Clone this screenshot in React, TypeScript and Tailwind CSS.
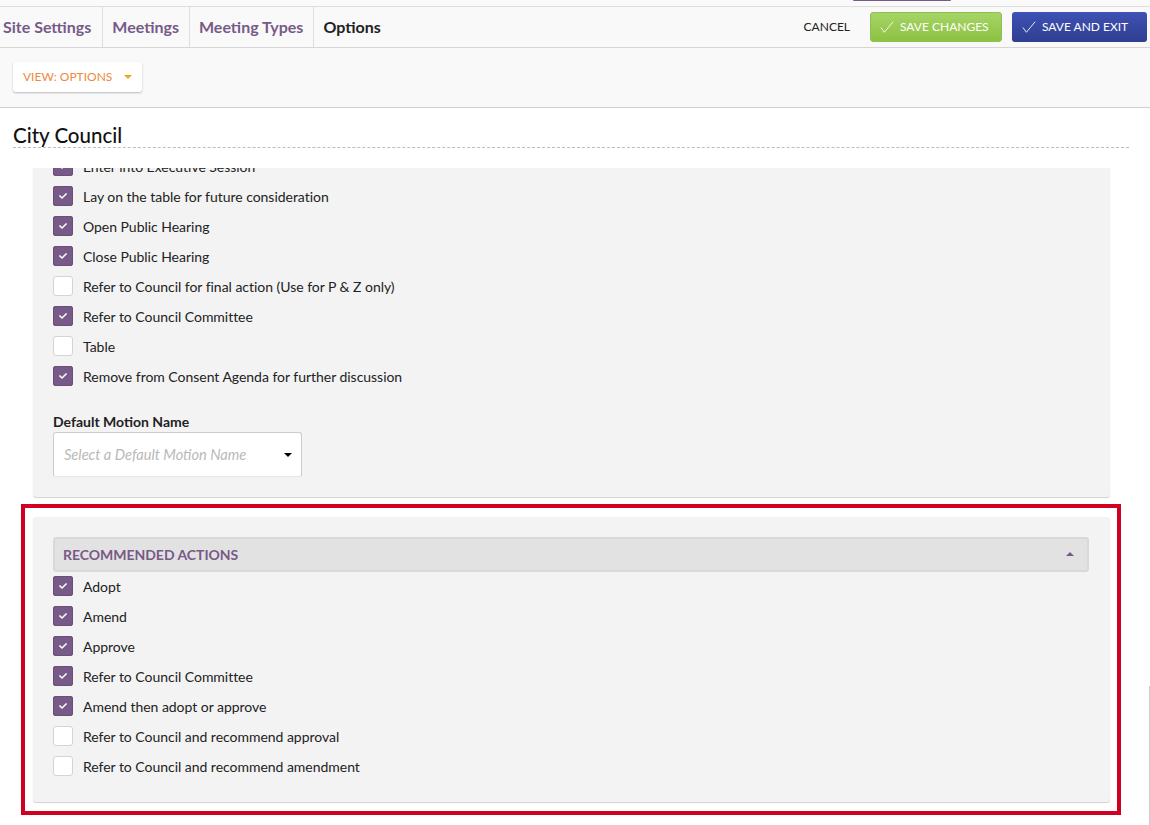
import { FaCheck } from "react-icons/fa"

const motionRows = [
  { label: "Enter into Executive Session", checked: true },
  { label: "Lay on the table for future consideration", checked: true },
  { label: "Open Public Hearing", checked: true },
  { label: "Close Public Hearing", checked: true },
  { label: "Refer to Council for final action (Use for P & Z only)", checked: false },
  { label: "Refer to Council Committee", checked: true },
  { label: "Table", checked: false },
  { label: "Remove from Consent Agenda for further discussion", checked: true },
]

const recommendedRows = [
  { label: "Adopt", checked: true },
  { label: "Amend", checked: true },
  { label: "Approve", checked: true },
  { label: "Refer to Council Committee", checked: true },
  { label: "Amend then adopt or approve", checked: true },
  { label: "Refer to Council and recommend approval", checked: false },
  { label: "Refer to Council and recommend amendment", checked: false },
]

function CheckRow({ label, checked }: { label: string; checked: boolean }) {
  return (
    <div className="flex h-5 items-center gap-[10px]">
      {checked ? (
        <span className="mb-[2px] flex h-5 w-5 items-center justify-center rounded-[3px] bg-[#775a87] shadow-[inset_0_0_0_1px_#6a4f7a]">
          <FaCheck className="h-2 w-2 text-white" />
        </span>
      ) : (
        <span className="mb-[2px] h-5 w-5 rounded-[3px] border border-[#d4d4d4] bg-white" />
      )}
      <span className="text-[14px] leading-5 tracking-[-0.03px] text-[#222222]">{label}</span>
    </div>
  )
}

function Tab({ label, active, first }: { label: string; active?: boolean; first?: boolean }) {
  return (
    <div
      className={`flex h-full items-center border-r border-[#dedede] text-[16px] font-bold ${first ? "pl-[3px] pr-[11px]" : "pl-[9px] pr-[10px]"} ${active ? "border-r-0 text-[#222222]" : "text-[#775a87]"}`}
    >
      {label}
    </div>
  )
}

function SaveCheck() {
  return (
    <svg viewBox="0 0 16 14" className="h-[14px] w-[14px]" fill="none" stroke="currentColor" strokeWidth="1">
      <path d="M1 7.5 5 13 15 1" />
    </svg>
  )
}

export default function App() {
  return (
    <div className="relative h-[825px] w-[1150px] overflow-hidden bg-white font-['Lato',sans-serif]">
      {/* top strip */}
      <div className="h-[7px] border-b border-[#dedede] bg-[#fafafa] pl-[853px]">
        <div className="h-px w-[98px] rounded-b bg-[#775a87]" />
      </div>

      {/* tabs + actions */}
      <div className="flex h-[41px] items-center justify-between border-b border-[#d6d6d6] bg-[#f9f9f9] pr-[3px] shadow-[0_1px_1px_rgba(0,0,0,0.08)]">
        <div className="flex h-full items-center">
          <Tab label="Site Settings" first />
          <Tab label="Meetings" />
          <Tab label="Meeting Types" />
          <Tab label="Options" active />
        </div>
        <div className="flex items-center">
          <span className="mr-5 text-[12px] text-[#222222]">CANCEL</span>
          <button className="mr-[10px] flex h-[30px] w-[132px] items-center gap-[6px] rounded-[3px] border border-[#8fc04f] bg-gradient-to-b from-[#a6d566] to-[#8dc140] pl-[9px] text-[12px] text-white">
            <SaveCheck />
            SAVE CHANGES
          </button>
          <button className="flex h-[30px] w-[135px] items-center gap-[6px] rounded-[3px] bg-gradient-to-b from-[#3f52b5] to-[#2f3e8f] pl-[10px] text-[12px] text-white">
            <SaveCheck />
            SAVE AND EXIT
          </button>
        </div>
      </div>

      {/* view bar */}
      <div className="flex h-[60px] items-start border-b border-[#d0d0d0] bg-[#f9f9f9] pl-[13px] pt-[14px] shadow-[0_1px_1px_rgba(0,0,0,0.08)]">
        <div className="flex h-[30px] w-[129px] items-center justify-between rounded-[3px] bg-white pl-[10px] pr-[10px] shadow-[0_1px_2px_rgba(0,0,0,0.25)]">
          <span className="text-[12px] text-[#ee8a3c]">VIEW: OPTIONS</span>
          <span className="mb-px h-0 w-0 border-x-[4px] border-t-[4px] border-x-transparent border-t-[#f5a21c]" />
        </div>
      </div>

      {/* title */}
      <div className="h-[60px] bg-white pl-[13px] pr-[21px] pt-[15px]">
        <div className="h-[25px] border-b border-dashed border-[#bdbdbd] text-[20.5px] font-medium leading-[25px] text-[#111111]">
          City Council
        </div>
      </div>

      {/* scrolling content */}
      <div className="h-[657px] overflow-hidden">
        <section className="ml-[33px] mt-[-31px] w-[1077px] rounded-[3px] bg-[#f3f3f3] px-5 pb-5 pt-5 shadow-[0_1px_1px_rgba(0,0,0,0.18)]">
          <div className="flex flex-col gap-[10px]">
            {motionRows.map((row) => (
              <CheckRow key={row.label} label={row.label} checked={row.checked} />
            ))}
          </div>
          <div className="mt-[25px] text-[14px] font-bold leading-5 text-[#222222]">Default Motion Name</div>
          <div className="flex h-[45px] w-[249px] items-center justify-between rounded-[3px] border border-[#cccccc] border-b-[#e6e6e6] bg-white pl-[10px] pr-[9px]">
            <span className="text-[14.6px] italic text-[#b9b9b9]">Select a Default Motion Name</span>
            <span className="h-0 w-0 border-x-[4px] border-t-[4px] border-x-transparent border-t-black" />
          </div>
        </section>

        {/* highlighted panel */}
        <div className="ml-[21px] mt-[7px] w-[1100px] border-4 border-[#cf0022] pb-[9px] pl-2 pr-[7px] pt-[9px]">
          <section className="rounded-[3px] bg-[#f3f3f3] pb-[25px] pl-5 pr-[21px] pt-5 shadow-[0_1px_1px_rgba(0,0,0,0.18)]">
            <div className="flex h-[35px] items-center justify-between rounded-[3px] border-2 border-[#d9d9d9] bg-[#e2e2e2] pl-2 pr-[13px]">
              <span className="text-[14px] font-bold tracking-[-0.03px] text-[#775a87]">RECOMMENDED ACTIONS</span>
              <span className="mb-px h-0 w-0 border-x-[4px] border-b-[4px] border-x-transparent border-b-[#775a87]" />
            </div>
            <div className="mt-[5px] flex flex-col gap-[10px]">
              {recommendedRows.map((row) => (
                <CheckRow key={row.label} label={row.label} checked={row.checked} />
              ))}
            </div>
          </section>
        </div>
      </div>

      {/* scrollbar edge */}
      <div className="absolute bottom-0 right-0 h-[139px] w-px bg-[#cccccc]" />
    </div>
  )
}
